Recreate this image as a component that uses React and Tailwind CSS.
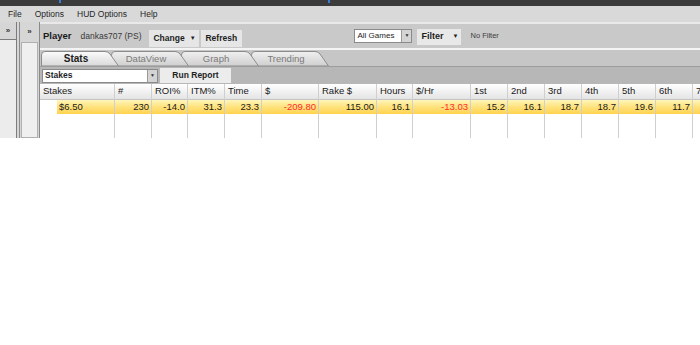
const COLUMNS = [
  { name: 'Stakes', w: 75 },
  { name: '#', w: 37 },
  { name: 'ROI%', w: 36 },
  { name: 'ITM%', w: 37 },
  { name: 'Time', w: 37 },
  { name: '$', w: 57 },
  { name: 'Rake $', w: 58 },
  { name: 'Hours', w: 36 },
  { name: '$/Hr', w: 58 },
  { name: '1st', w: 37 },
  { name: '2nd', w: 37 },
  { name: '3rd', w: 37 },
  { name: '4th', w: 37 },
  { name: '5th', w: 37 },
  { name: '6th', w: 37 },
  { name: '7th', w: 37 },
];

const ROW = ['$6.50', '230', '-14.0', '31.3', '23.3', '-209.80', '115.00', '16.1', '-13.03', '15.2', '16.1', '18.7', '18.7', '19.6', '11.7', ''];

const TABS = ['Stats', 'DataView', 'Graph', 'Trending'];

function Tab({ label, active, z }) {
  return (
    <div className="relative h-[15px] w-[78px] -mr-[8px] flex items-center" style={{ zIndex: z }}>
      <svg className="absolute inset-0" width="78" height="15" viewBox="0 0 78 15">
        <defs>
          <linearGradient id={`g-${label}`} x1="0" y1="0" x2="0" y2="1">
            <stop offset="0" stopColor={active ? '#fbfbfb' : '#f0f0f0'} />
            <stop offset="1" stopColor={active ? '#d9d9d9' : '#cfcfcf'} />
          </linearGradient>
        </defs>
        <path
          d="M0.5,15 L0.5,4 Q0.5,0.5 4,0.5 L64,0.5 Q67,0.5 69,3 L77.5,15 Z"
          fill={`url(#g-${label})`}
          stroke="#8c8c8c"
        />
      </svg>
      <span
        className={`relative w-[70px] text-center text-[9.5px] leading-none ${active ? 'font-bold text-[#1c1c1c] text-[10px]' : 'text-[#7a7a7a]'}`}
      >
        {label}
      </span>
    </div>
  );
}

export default function App() {
  return (
    <div className="w-[700px] h-[345px] bg-white font-['Liberation_Sans',Arial,sans-serif] text-[#1e1e1e] overflow-hidden">
      {/* window title strip */}
      <div className="h-[6px] bg-[#3b3b3b] flex">
        <div className="w-[59px]" />
        <div className="w-[2px] h-[3px] bg-[#3d7bd8]" />
        <div className="w-[267px]" />
        <div className="w-[2px] h-[3px] bg-[#3d7bd8]" />
      </div>

      {/* menu bar */}
      <div className="h-[16px] bg-[#d9d9d9] flex items-center text-[8.5px] text-[#262626] leading-none">
        <span className="ml-[8px]">File</span>
        <span className="ml-[13px]">Options</span>
        <span className="ml-[13px]">HUD Options</span>
        <span className="ml-[13px]">Help</span>
      </div>

      <div className="flex h-[116px]">
        {/* collapsed side panel 1 */}
        <div className="w-[17px] bg-[#ececec] border-r border-[#7c7c7c] flex flex-col">
          <div className="h-[18px] bg-[#d6d6d6] border-b border-[#7c7c7c] flex items-center justify-center text-[8px] font-bold text-[#333]">
            »
          </div>
        </div>
        <div className="w-[2px] bg-[#d6d6d6]" />
        {/* collapsed side panel 2 */}
        <div className="w-[21px] bg-[#d6d6d6] border-l border-r border-[#8a8a8a] flex flex-col">
          <div className="h-[20px] flex items-center justify-center text-[8px] font-bold text-[#333]">
            »
          </div>
          <div className="flex-1 mx-[1px] bg-[#efefef] border border-[#b0b0b0]" />
        </div>

        {/* main */}
        <div className="flex-1 flex flex-col min-w-0">
          {/* player bar */}
          <div className="h-[28px] bg-[#c9c9c9] border-t-2 border-[#e9e9e9] border-b-2 border-b-[#f4f4f4] flex items-center">
            <span className="ml-[3px] text-[9.5px] font-bold text-[#1a1a1a]">Player</span>
            <span className="ml-[9px] text-[8.5px] text-[#3a3a3a]">dankas707 (PS)</span>
            <div className="ml-[8px] mt-[4px] h-[17px] w-[50px] bg-[#e6e6e6] flex items-center text-[8.5px] font-bold">
              <span className="ml-[4px]">Change</span>
              <span className="ml-[5px] text-[6px]">▼</span>
            </div>
            <div className="ml-[2px] mt-[4px] h-[17px] w-[41px] bg-[#e6e6e6] flex items-center text-[8.5px] font-bold">
              <span className="ml-[4px]">Refresh</span>
            </div>
            <div className="ml-[112px] h-[14px] w-[58px] bg-white border border-[#8a8a8a] flex items-center text-[8px]">
              <span className="ml-[2px] flex-1">All Games</span>
              <div className="w-[10px] h-[12px] bg-[#d4d4d4] border-l border-[#9a9a9a] flex items-center justify-center text-[5px] text-[#333]">▼</div>
            </div>
            <div className="ml-[5px] mt-[1px] h-[16px] w-[44px] bg-[#e8e8e8] flex items-center text-[9px] font-bold">
              <span className="ml-[4px]">Filter</span>
              <span className="ml-[9px] text-[6px]">▼</span>
            </div>
            <span className="ml-[9px] text-[7.5px] text-[#3c3c3c]">No Filter</span>
          </div>

          {/* tabs */}
          <div className="h-[16px] bg-[#c6c6c6] flex items-end pl-[1px]">
            {TABS.map((t, i) => (
              <Tab key={t} label={t} active={i === 0} z={10 - i} />
            ))}
          </div>

          {/* toolbar */}
          <div className="h-[18px] bg-[#b7b7b7] border-t border-[#9c9c9c] flex items-center">
            <div className="ml-[2px] h-[14px] w-[116px] bg-white border border-[#8a8a8a] flex items-center text-[8.5px] font-bold">
              <span className="ml-[2px] flex-1">Stakes</span>
              <div className="w-[10px] h-[12px] bg-[#d4d4d4] border-l border-[#9a9a9a] flex items-center justify-center text-[5px] font-normal text-[#333]">▼</div>
            </div>
            <div className="ml-[2px] h-[15px] w-[71px] bg-[#ececec] flex items-center justify-center text-[8.5px] font-bold">
              Run Report
            </div>
          </div>

          {/* table */}
          <div className="flex-1 bg-white flex overflow-hidden text-[9.5px]">
            {COLUMNS.map((c, i) => (
              <div key={c.name} className="shrink-0 flex flex-col border-r border-[#cfcfcf]" style={{ width: c.w }}>
                <div className="h-[16px] bg-gradient-to-b from-white to-[#e4e4e4] border-b border-[#c4c4c4] flex items-center pl-[3px] whitespace-nowrap text-[#202020]">
                  {c.name}
                </div>
                <div className={`h-[14px] flex ${i === 0 ? 'pl-[17px]' : ''}`}>
                  <div
                    className={`flex-1 flex items-center bg-gradient-to-b from-[#fff6b8] via-[#ffe27c] to-[#ffd24c] whitespace-nowrap ${i === 0 ? 'pl-[2px]' : 'justify-end pr-[2px]'} ${ROW[i].startsWith('-2') || ROW[i].startsWith('-13') ? 'text-[#ff2b2b]' : 'text-[#1a1a1a]'}`}
                  >
                    {ROW[i]}
                  </div>
                </div>
                <div className="flex-1" />
              </div>
            ))}
          </div>
        </div>
      </div>
    </div>
  );
}
